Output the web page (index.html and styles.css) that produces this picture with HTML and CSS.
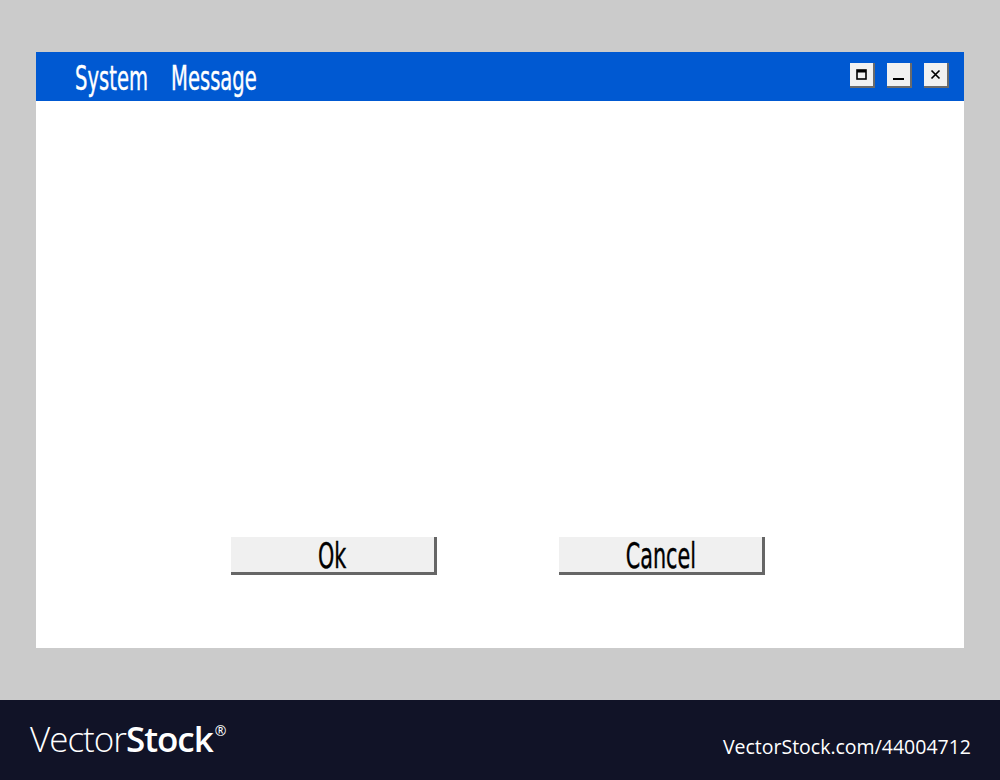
FILE: index.html
```html
<!DOCTYPE html>
<html lang="en">
<head>
<meta charset="utf-8">
<title>System Message</title>
<link rel="stylesheet" href="styles.css">
</head>
<body>
<main class="stage">
  <section class="window">
    <header class="titlebar">
      <h1 class="title"><span class="cond">System</span><span class="cond">Message</span></h1>
      <div class="controls">
        <button class="ctl" aria-label="Maximize">
          <svg width="13" height="13" viewBox="0 0 13 13"><rect x="2" y="2" width="9" height="9" fill="none" stroke="#000" stroke-width="1.6"/><rect x="2" y="2" width="9" height="2.5" fill="#000"/></svg>
        </button>
        <button class="ctl" aria-label="Minimize">
          <svg width="13" height="13" viewBox="0 0 13 13"><rect x="1" y="10" width="11" height="2" fill="#000"/></svg>
        </button>
        <button class="ctl" aria-label="Close">
          <svg width="13" height="13" viewBox="0 0 13 13"><path d="M2.5 2.5 L10.5 10.5 M10.5 2.5 L2.5 10.5" stroke="#000" stroke-width="1.7"/></svg>
        </button>
      </div>
    </header>
    <div class="content">
      <div class="actions">
        <button class="btn"><span class="cond">Ok</span></button>
        <button class="btn"><span class="cond">Cancel</span></button>
      </div>
    </div>
  </section>
</main>
<footer class="footer">
  <div class="logo"><span class="thin">Vector</span><span class="bold">Stock</span><sup class="reg">®</sup></div>
  <div class="url">VectorStock.com/44004712</div>
</footer>
</body>
</html>
```

FILE: styles.css
```css
html, body {
  margin: 0;
  padding: 0;
}
body {
  width: 1000px;
  height: 780px;
  background: #cbcbcb;
  display: flex;
  flex-direction: column;
  font-family: "DejaVu Sans Condensed", "DejaVu Sans", sans-serif;
  font-stretch: condensed;
  overflow: hidden;
}
.stage {
  height: 700px;
  box-sizing: border-box;
  padding: 52px 36px 52px 36px;
}
.window {
  height: 596px;
  background: #ffffff;
  display: flex;
  flex-direction: column;
}
.titlebar {
  height: 49px;
  background: #0059d2;
  display: flex;
  align-items: center;
  justify-content: space-between;
  padding: 0 15px 0 39px;
}
.title {
  margin: 0;
  display: flex;
  gap: 26px;
  color: #fff;
  font-weight: normal;
  font-size: 34px;
  line-height: 1;
  padding-top: 2px;
  -webkit-text-stroke: 0.4px #fff;
}
.cond {
  display: inline-block;
  transform: scaleX(0.64);
  transform-origin: left center;
}
.title .cond:first-child { width: 70px; }
.title .cond:last-child { width: 83px; }
.controls {
  display: flex;
  gap: 12px;
  margin-top: -2px;
}
.ctl {
  width: 25px;
  height: 25px;
  padding: 0;
  margin: 0;
  box-sizing: border-box;
  background: #f1f1f1;
  border: none;
  border-right: 2px solid #6b6b6b;
  border-bottom: 2px solid #6b6b6b;
  display: flex;
  align-items: center;
  justify-content: center;
}
.content {
  flex: 1;
  display: flex;
  flex-direction: column;
  justify-content: flex-end;
}
.actions {
  display: flex;
  gap: 122px;
  padding: 0 0 73px 195px;
}
.btn {
  width: 206px;
  height: 38px;
  margin: 0;
  padding: 2px 0 0 0;
  box-sizing: border-box;
  background: #f0f0f0;
  border: none;
  border-right: 3px solid #666666;
  border-bottom: 3px solid #666666;
  font-family: "DejaVu Sans Condensed", "DejaVu Sans", sans-serif;
  font-stretch: condensed;
  font-size: 36px;
  line-height: 1;
  color: #000;
  display: flex;
  align-items: center;
  justify-content: center;
  -webkit-text-stroke: 0.4px #000;
}
.btn .cond {
  transform-origin: center center;
}
.footer {
  height: 80px;
  background: #111327;
  display: flex;
  align-items: center;
  justify-content: space-between;
  padding: 0 29px 0 30px;
  color: #ffffff;
  font-family: "Open Sans", sans-serif;
  font-stretch: normal;
}
.logo {
  font-size: 35px;
  line-height: 1;
  letter-spacing: -1px;
  padding-bottom: 4px;
}
.logo .thin { font-weight: 300; }
.logo .bold { font-weight: 600; }
.logo .reg {
  font-size: 14px;
  font-weight: 400;
  vertical-align: 16px;
  margin-left: 2px;
}
.url {
  font-size: 19.5px;
  padding-top: 12px;
}
```
